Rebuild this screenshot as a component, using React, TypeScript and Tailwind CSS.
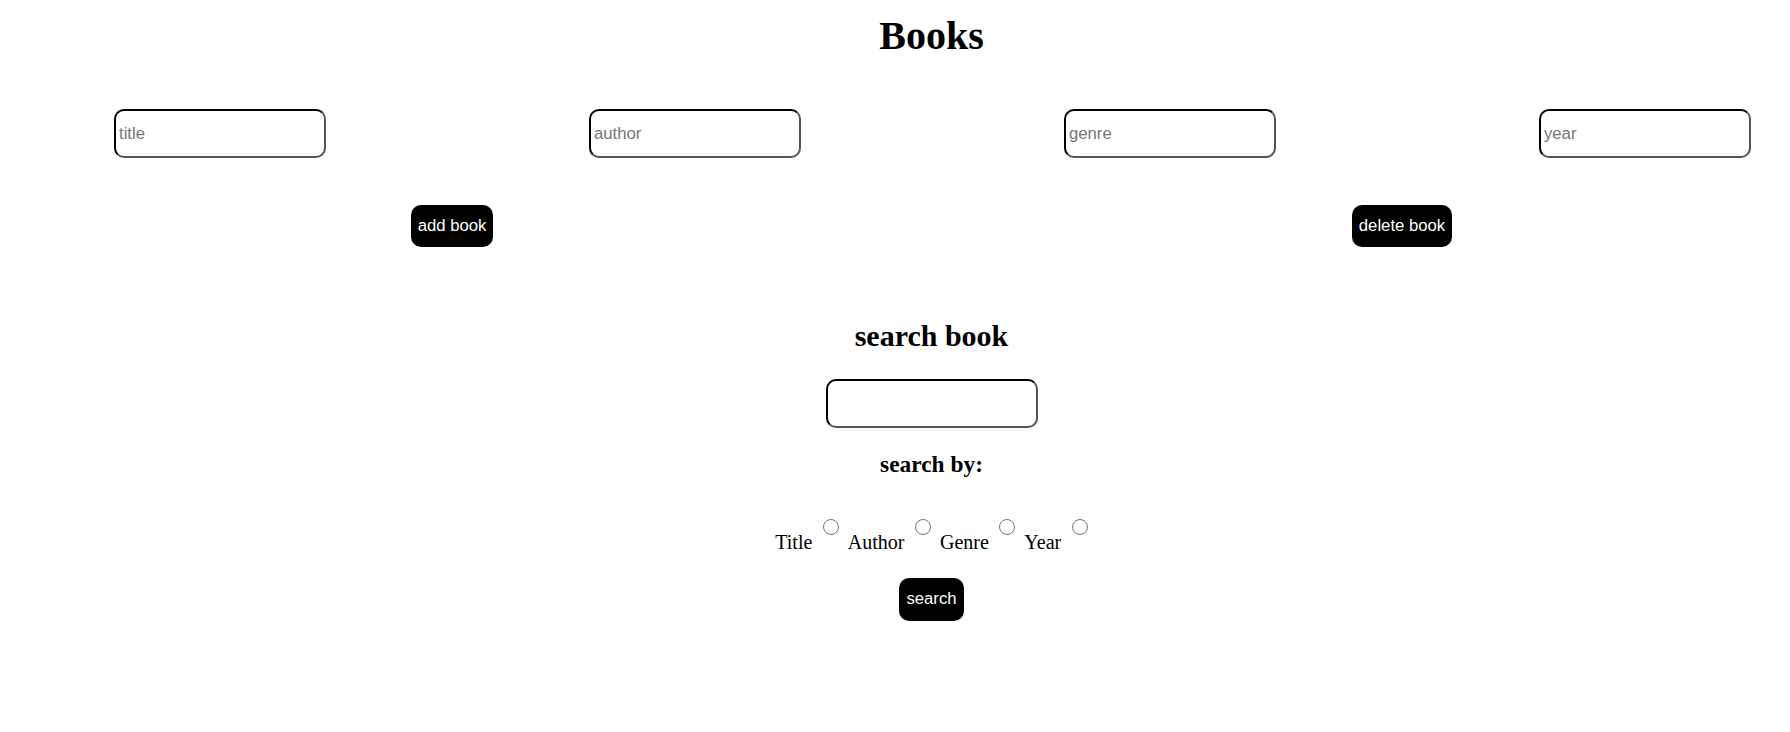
import React from 'react'

const fields = ['title', 'author', 'genre', 'year']
const searchKeys = ['Title', 'Author', 'Genre', 'Year']

const inputClass =
  "h-[49px] w-[212px] rounded-[10px] border-2 border-t-black border-l-black border-b-[#555555] border-r-[#555555] bg-white pl-[3px] font-['Liberation_Sans',Arial,sans-serif] text-[16.7px] text-black outline-none placeholder:text-[#757575]"

const buttonClass =
  "h-[42px] shrink-0 whitespace-nowrap rounded-[10px] bg-black px-0 text-center font-['Liberation_Sans',Arial,sans-serif] text-[16.7px] text-white"

export default function App() {
  return (
    <div className="min-h-screen overflow-hidden bg-white pt-[13px] font-['Liberation_Serif','Times_New_Roman',serif] text-black">
      <h1 className="pl-[73px] text-center text-[40px] leading-[46px] font-bold">Books</h1>

      <div className="mt-[50px] flex gap-[263px] pl-[114px]">
        {fields.map((f) => (
          <input key={f} type="text" placeholder={f} className={inputClass} />
        ))}
      </div>

      <div className="mt-[47px] flex gap-[859px] pl-[411px]">
        <button className={`${buttonClass} w-[82px]`}>add book</button>
        <button className={`${buttonClass} w-[100px]`}>delete book</button>
      </div>

      <div className="flex flex-col items-center pl-[73px]">
        <h2 className="mt-[72px] text-[30px] leading-[34.5px] font-bold">search book</h2>
        <input type="text" className={`${inputClass} mt-[25px]`} />
        <h3 className="mt-[23px] text-[23.4px] leading-[27px] font-bold">search by:</h3>

        <div className="mt-[41px] flex items-start">
          {searchKeys.map((k, i) => (
            <div key={k} className={`flex items-start ${i > 0 ? 'ml-[9px]' : ''}`}>
              <span className="mt-[12px] text-[20px] leading-[23px]">{k}</span>
              <input type="radio" name="searchBy" className="ml-[10.5px] h-4 w-4" />
            </div>
          ))}
        </div>

        <button className={`${buttonClass} mt-[24px] h-[43px] w-[65px]`}>search</button>
      </div>
    </div>
  )
}
